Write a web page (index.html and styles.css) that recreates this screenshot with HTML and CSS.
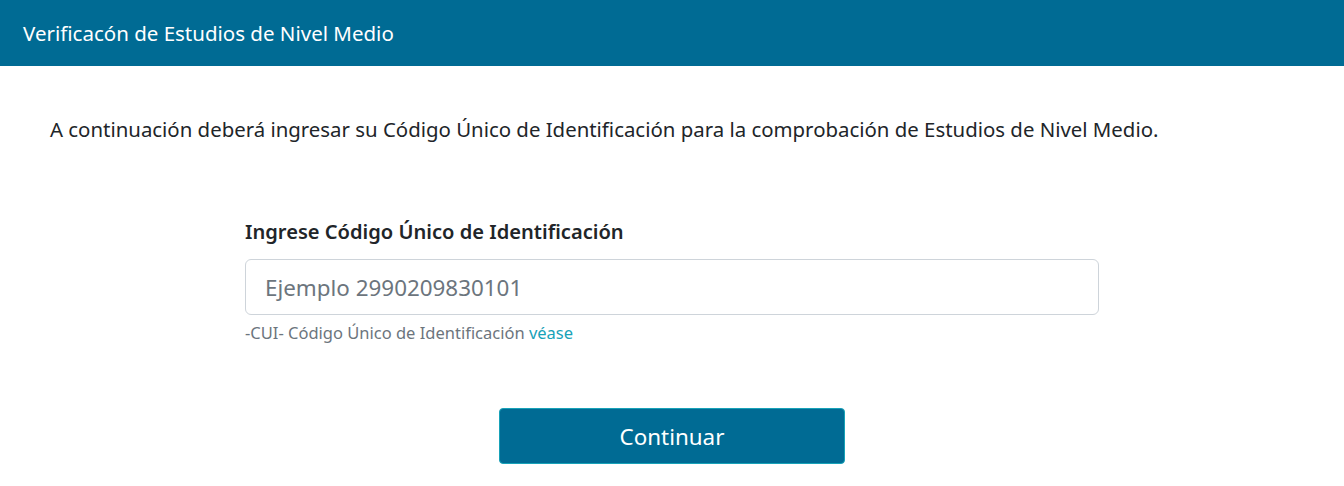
FILE: index.html
```html
<!DOCTYPE html>
<html lang="es">
<head>
    <meta charset="UTF-8">
    <meta name="viewport" content="width=device-width, initial-scale=1.0">
    <title>Verificación de Estudios de Nivel Medio</title>
    <link rel="stylesheet" href="styles.css">
</head>
<body>
    <header class="topbar">
        <h1 class="topbar-title">Verificacón de Estudios de Nivel Medio</h1>
    </header>
    <main class="content">
        <p class="intro">A continuación deberá ingresar su Código Único de Identificación para la comprobación de Estudios de Nivel Medio.</p>
        <form class="cui-form" onsubmit="return false;">
            <label class="cui-label" for="cui">Ingrese Código Único de Identificación</label>
            <input class="cui-input" type="text" id="cui" placeholder="Ejemplo 2990209830101">
            <small class="cui-help">-CUI- Código Único de Identificación <a href="#">véase</a></small>
            <div class="actions">
                <button class="btn-continue" type="submit">Continuar</button>
            </div>
        </form>
    </main>
</body>
</html>
```

FILE: styles.css
```css
body {
    margin: 0;
    padding: 0;
    font-family: "Noto Sans", "Open Sans", sans-serif;
    color: #212529;
    background: #fff;
}
.topbar {
    background: #006b94;
    height: 66px;
    display: flex;
    align-items: center;
    padding: 0 23px;
}
.topbar-title {
    margin: 0;
    font-size: 20.5px;
    font-weight: 400;
    color: #fff;
}
.content {
    padding: 0 50px;
}
.intro {
    margin: 50px 0 0;
    font-size: 20.4px;
    line-height: 26px;
}
.cui-form {
    width: 854px;
    margin: 77px auto 0;
    display: flex;
    flex-direction: column;
}
.cui-label {
    font-size: 20.1px;
    line-height: 26px;
    font-weight: 600;
    margin-bottom: 14px;
}
.cui-input {
    height: 56px;
    box-sizing: border-box;
    border: 1px solid #ced4da;
    border-radius: 6px;
    padding: 0 19px;
    font-family: inherit;
    font-size: 22.4px;
    color: #495057;
}
.cui-input::placeholder {
    color: #6c757d;
}
.cui-help {
    margin-top: 8px;
    font-size: 16.5px;
    line-height: 20px;
    color: #6c757d;
}
.cui-help a {
    color: #17a2b8;
    text-decoration: none;
}
.actions {
    display: flex;
    justify-content: center;
    margin-top: 65px;
}
.btn-continue {
    width: 346px;
    height: 56px;
    background: #006b94;
    border: 1px solid #17a2b8;
    border-radius: 4px;
    color: #fff;
    font-family: inherit;
    font-size: 22.4px;
    cursor: pointer;
}
```
